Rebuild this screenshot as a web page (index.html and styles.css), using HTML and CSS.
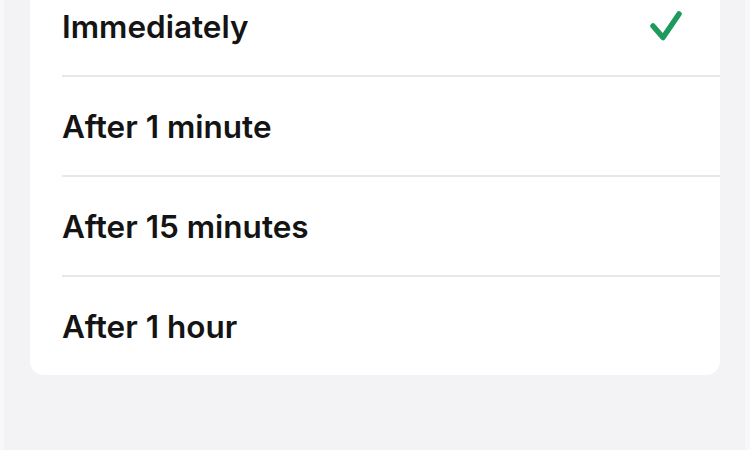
FILE: index.html
```html
<!DOCTYPE html>
<html>
<head>
<meta charset="utf-8">
<link rel="stylesheet" href="styles.css">
</head>
<body>
<div class="page">
  <div class="card">
    <div class="row">
      <div class="row-inner">
        <span class="label">Immediately</span>
        <svg class="check" width="36" height="34" viewBox="0 0 36 34">
          <polyline points="4,16 14,27.5 30,4" fill="none" stroke="#1e9a5c" stroke-width="5.5" stroke-linecap="round" stroke-linejoin="round"/>
        </svg>
      </div>
    </div>
    <div class="row">
      <div class="row-inner"><span class="label">After 1 minute</span></div>
    </div>
    <div class="row">
      <div class="row-inner"><span class="label">After 15 minutes</span></div>
    </div>
    <div class="row">
      <div class="row-inner last"><span class="label">After 1 hour</span></div>
    </div>
  </div>
</div>
</body>
</html>
```
FILE: styles.css
```css
html, body {
  margin: 0;
  padding: 0;
  background: #f3f3f5;
  overflow: hidden;
}
.page {
  display: flow-root;
  width: 750px;
  height: 450px;
  box-sizing: border-box;
  border-left: 4px solid #f8f8f8;
  border-right: 5px solid #f8f8f8;
  padding-left: 26px;
  padding-right: 25px;
}
.card {
  margin-top: -23px;
  background: #ffffff;
  border-radius: 14px;
  overflow: hidden;
}
.row {
  padding-left: 32px;
}
.row-inner {
  height: 100px;
  box-sizing: border-box;
  border-bottom: 2px solid #e8e8ea;
  display: flex;
  align-items: center;
  justify-content: space-between;
  padding-right: 35px;
}
.row-inner.last {
  border-bottom: none;
  height: 98px;
}
.label {
  font-family: "Inter", "Liberation Sans", sans-serif;
  font-weight: 600;
  font-size: 31.5px;
  color: #141414;
  letter-spacing: 0;
}
.check {
  display: block;
  margin-top: 1px;
}
```
